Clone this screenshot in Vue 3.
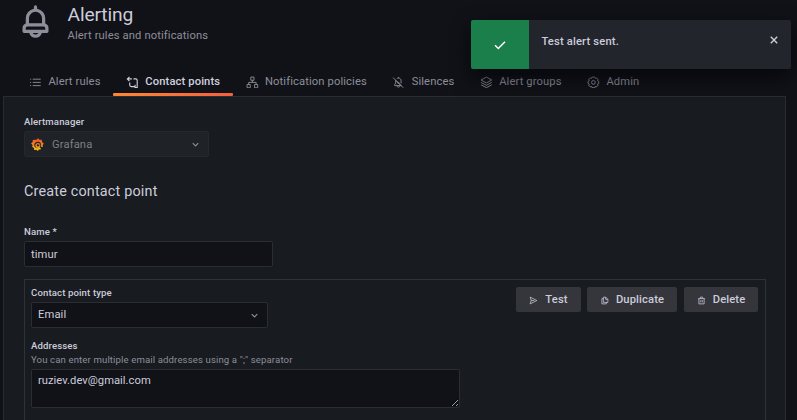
<script setup>
import { ref } from 'vue'

const tabs = [
  { id: 'rules', label: 'Alert rules' },
  { id: 'contacts', label: 'Contact points' },
  { id: 'policies', label: 'Notification policies' },
  { id: 'silences', label: 'Silences' },
  { id: 'groups', label: 'Alert groups' },
  { id: 'admin', label: 'Admin' },
]
const active = ref('contacts')
const name = ref('timur')
const addresses = ref('ruziev.dev@gmail.com')
const toastOpen = ref(true)
</script>

<template>
  <div class="page">
    <header class="header">
      <svg class="bell" viewBox="0 0 24 24"><path d="M18 13.18V10a6 6 0 0 0-5-5.91V3a1 1 0 0 0-2 0v1.09A6 6 0 0 0 6 10v3.18A3 3 0 0 0 4 16v2a1 1 0 0 0 1 1h3.14a4 4 0 0 0 7.72 0H19a1 1 0 0 0 1-1v-2a3 3 0 0 0-2-2.82M8 10a4 4 0 0 1 8 0v3H8Zm4 10a2 2 0 0 1-1.72-1h3.44A2 2 0 0 1 12 20m6-3H6v-1a1 1 0 0 1 1-1h10a1 1 0 0 1 1 1Z" /></svg>
      <div class="heading">
        <h1>Alerting</h1>
        <p>Alert rules and notifications</p>
      </div>
    </header>

    <nav class="tabs">
      <a v-for="tab in tabs" :key="tab.id" class="tab" :class="{ active: tab.id === active }" @click="active = tab.id">
        <svg class="icon" viewBox="0 0 24 24">
          <path v-if="tab.id === 'rules'" d="M2 6h2M2 12h2M2 18h2M7 6h15M7 12h15M7 18h15" />
          <path v-else-if="tab.id === 'contacts'" class="bold" d="M3 5.500h8M6.500 1.500 2.500 5.500l4 4M14 5.500h4q3 0 3 3v13M7 12v5q0 3 3 3h7M17 16.500v5h5" />
          <path v-else-if="tab.id === 'policies'" d="M9 2h6v6H9ZM2 16h6v6H2ZM16 16h6v6h-6ZM12 8v4M5 16v-4h14v4" />
          <path v-else-if="tab.id === 'silences'" d="M2 3l19 19M7 8v6c-2 0-2 2-2 4h13M9 5c4-3 8 0 8 4v5M12 2v2M9 18c1 4 5 4 6 0M8 9l8 8M10 13h4" />
          <path v-else-if="tab.id === 'groups'" d="M12 2 22 7.500 12 13 2 7.500ZM2 12l10 5.500L22 12M2 16.500 12 22l10-5.500" />
          <g v-else>
            <path d="M9.500 2h5l1 2.300L18 3.700l2.500 2.500-.7 2.600L22 10v4l-2.200 1.200.7 2.600-2.500 2.500-2.500-.6-1 2.300h-5l-1-2.300-2.500.6-2.500-2.500.7-2.600L2 14v-4l2.200-1.200-.7-2.600L6 3.700l2.500.6Z" />
            <circle cx="12" cy="12" r="3.500" />
          </g>
        </svg>
        <span>{{ tab.label }}</span>
      </a>
    </nav>

    <main class="panel">
      <label class="label">Alertmanager</label>
      <div class="select manager">
        <svg class="grafana" viewBox="0 0 24 24">
          <defs>
            <linearGradient id="flame" x1="0" y1="1" x2="0" y2="0">
              <stop offset="0" stop-color="#fcd20b" /><stop offset=".45" stop-color="#f58a20" /><stop offset="1" stop-color="#ee4b2b" />
            </linearGradient>
          </defs>
          <path fill="url(#flame)" fill-rule="evenodd" d="m7 3 3.500.2L13 0l2.500 3 4.500.2.500 4 3 3-2 3.300.5 3-3.500-.5c1.200-5.500-1.500-9-6-9-4 0-6.500 2.700-6.500 6 0 3.500 2.500 5.700 5.500 5.700 2 0 3.500-.7 4.500-2l2 2-.2 2.300-3.800.1L13 24l-3-2.500-4 .7-.7-4L2 16.500 3 13 0 10l3-2.500.3-4ZM17.500 13.500c0 2.800-2 4.800-4.700 4.800-2.800 0-4.800-2-4.800-4.600C8 11 10 9 12.800 9c2.400 0 4 1.400 4.400 3.400h-2.700c-.4-.7-1-1-1.800-1-1.300 0-2.100.9-2.100 2.200 0 1.300 1 2.200 2.200 2.200 1.300 0 2.100-.8 2.300-2.300Z" />
        </svg>
        <span>Grafana</span>
        <svg class="chevron" viewBox="0 0 12 12"><path d="m3 4.500 3 3 3-3" /></svg>
      </div>

      <h2>Create contact point</h2>

      <label class="label" for="name">Name *</label>
      <input id="name" v-model="name" class="name" spellcheck="false" />

      <section class="contact">
        <div class="row">
          <div>
            <label class="label">Contact point type</label>
            <div class="select type">
              <span>Email</span>
              <svg class="chevron" viewBox="0 0 12 12"><path d="m3 4.500 3 3 3-3" /></svg>
            </div>
          </div>
          <div class="actions">
            <button class="test">
              <svg viewBox="0 0 12 12"><path d="M1.500 1.500 10.500 6l-9 4.500L3 6ZM3 6h4" /></svg>Test
            </button>
            <button class="duplicate">
              <svg viewBox="0 0 12 12"><path d="M4.500 1.500h3l3 3v4h-6ZM7.500 1.500v3h3M4.500 3.500h-2v7h6v-2" /></svg>Duplicate
            </button>
            <button class="delete">
              <svg viewBox="0 0 12 12"><path d="M1.500 3.500h9M4.500 3.500v-2h3v2M2.500 3.500v7h7v-7M5 5.500v3M7 5.500v3" /></svg>Delete
            </button>
          </div>
        </div>
        <label class="label addresses" for="addresses">Addresses</label>
        <p class="hint">You can enter multiple email addresses using a ";" separator</p>
        <textarea id="addresses" v-model="addresses" spellcheck="false"></textarea>
      </section>
    </main>

    <div v-if="toastOpen" class="toast">
      <div class="status"><svg viewBox="0 0 12 12"><path d="m1 6.300 3.300 3.200L11 2.700" /></svg></div>
      <div class="message">Test alert sent.</div>
      <svg class="close" viewBox="0 0 10 10" @click="toastOpen = false"><path d="m1.800 1.800 6.400 6.400M8.200 1.800 1.800 8.200" /></svg>
    </div>
  </div>
</template>

<style>
body { background: #111217; overflow: hidden; }
</style>

<style scoped>
* { box-sizing: border-box; }
.page {
  height: 420px;
  overflow: hidden;
  display: flex;
  flex-direction: column;
  background: #111217;
  color: #ccccdc;
  font: 11.2px/16px Roboto, sans-serif;
  letter-spacing: .12px;
}
svg { fill: none; stroke: currentColor; flex: none; }
h1, h2, p { margin: 0; font-weight: 400; }
.header { height: 68px; flex: none; display: flex; padding-left: 16px; color: #8e8e9b; }
.bell { width: 39px; height: 39px; margin-top: 2px; fill: currentColor; stroke: none; }
.heading { margin-left: 12.5px; padding-top: 3px; }
h1 { font-size: 19.2px; line-height: 24px; color: #ccccdc; letter-spacing: -.12px; }
.heading p { margin-top: 1px; line-height: 16px; }
.tabs { display: flex; height: 28px; flex: none; padding-left: 16.4px; }
.tab { display: flex; align-items: center; gap: 6.4px; padding: 0 12.8px; color: #8e8e9b; height: 28px; position: relative; cursor: pointer; }
.tab.active { color: #d0d0df; font-weight: 500; }
.tab.active::after { content: ''; position: absolute; left: 0; right: 0; bottom: 0; height: 3px; border-radius: 1px; background: linear-gradient(90deg, #ff8833, #f55f3e); }
.icon { width: 12.8px; height: 12.8px; stroke-width: 1.7; }
.bold { stroke-width: 2.1; }
.panel { width: 783px; height: 340px; flex: none; margin-left: 3px; padding: 19px 19px 0 20px; border: 1px solid #292b30; background: #181b1f; }
.label { display: block; font-size: 9.6px; line-height: 12px; font-weight: 500; letter-spacing: .12px; }
.select { display: flex; align-items: center; height: 26px; border: 1px solid #2c2d33; border-radius: 2px; padding: 0 7px 0 6px; background: #111217; }
.chevron { width: 11px; height: 11px; margin-left: auto; color: #8e8e9b; stroke-width: 1.2; }
.manager { width: 185px; margin-top: 3px; padding-top: 1px; background: #1f2227; border-color: #25282d; color: #7d7e89; }
.grafana { width: 13px; height: 13px; margin-right: 8px; stroke: none; }
h2 { margin: 25px 0 24px; font-size: 14.4px; line-height: 20px; letter-spacing: .18px; }
input, textarea { display: block; border: 1px solid #2c2d33; border-radius: 2px; background: #111217; color: #ccccdc; font: inherit; letter-spacing: inherit; outline: none; }
.name { width: 249px; height: 26px; margin-top: 3px; padding: 0 6px; }
.contact { width: 742px; height: 200px; margin-top: 12px; padding: 7px 7px 0 6px; border: 1px solid #303238; }
.row { display: flex; justify-content: space-between; }
.type { width: 237px; margin-top: 3px; padding-bottom: 1px; }
.type .chevron { position: relative; top: 1px; }
.actions { display: flex; gap: 6px; }
button { display: flex; align-items: center; justify-content: center; gap: 7px; height: 25px; padding: 1px 0 0; border: 0; border-radius: 2px; background: #34363b; color: #ccccdc; font: 500 11.2px/16px Roboto, sans-serif; letter-spacing: .12px; }
button svg { width: 9px; height: 9px; stroke-width: 1; }
.test { width: 65px; }
.duplicate { width: 90px; }
.delete { width: 74px; margin-left: 1px; }
.addresses { margin-top: 12px; }
.hint { color: #8e8e9b; font-size: 9.6px; line-height: 12px; margin-top: 2px; }
textarea { width: 429px; height: 39px; margin-top: 3px; padding: 3px 6px 1px; resize: vertical; letter-spacing: .03px; }
.toast { position: absolute; left: 471px; top: 20px; width: 320px; height: 49px; display: flex; border-radius: 2px; overflow: hidden; background: #22252b; box-shadow: 0 8px 20px rgba(1, 4, 9, .75); }
.status { width: 58px; display: flex; align-items: center; justify-content: center; background: #1a7f4b; color: #fff; }
.status svg { width: 12px; height: 12px; margin-right: 1px; stroke-width: 1.5; }
.message { flex: 1; padding: 14px 0 0 12.4px; font-weight: 500; letter-spacing: .16px; }
.close { width: 10px; height: 10px; margin: 15px 12px 0 0; stroke-width: 1.4; cursor: pointer; }
</style>
